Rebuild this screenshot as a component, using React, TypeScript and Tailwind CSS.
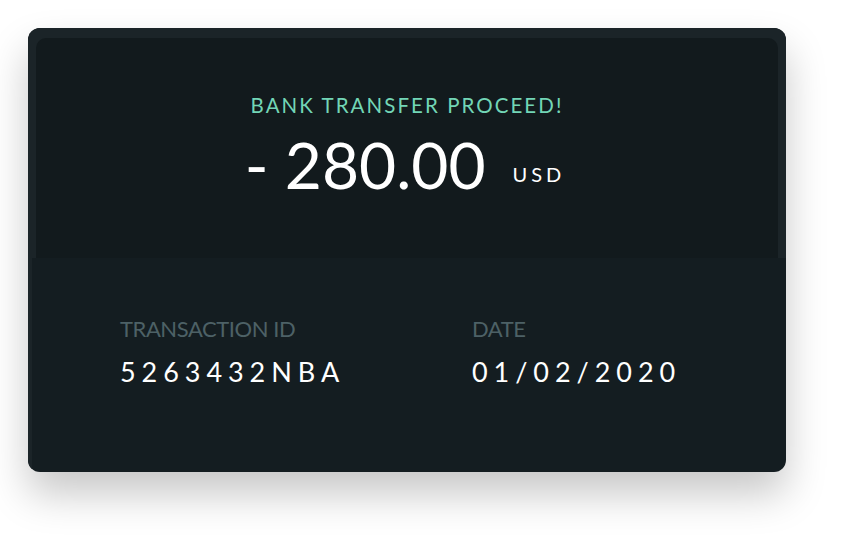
export default function App() {
  return (
    <div className="w-[850px] h-[536px] bg-white pt-[28px] pl-[28px]" style={{ fontFamily: 'Lato, "Open Sans", sans-serif' }}>
      <div className="w-[758px] h-[444px] rounded-[12px] bg-[#141d21] shadow-[0_22px_40px_rgba(0,0,0,0.22)] overflow-hidden flex flex-col">
        <div className="bg-[#1b2428] pt-[10px] px-[8px]">
          <div className="h-[220px] rounded-t-[10px] bg-[#121a1d] flex flex-col items-center pt-[57px]">
            <div className="text-[20.5px] leading-none text-[#72d6b6] tracking-[0.1em]">BANK TRANSFER PROCEED!</div>
            <div className="flex items-baseline mt-[17px] text-white ml-[-4px]">
              <span className="text-[64px] leading-none">- 280.00</span>
              <span className="relative top-[-7px] text-[20px] tracking-[0.2em] ml-[27px]">USD</span>
            </div>
          </div>
        </div>
        <div className="flex-1 border-l-4 border-[#1b2428] flex pl-[88px] pt-[60px]">
          <div className="w-[352px]">
            <div className="text-[22px] leading-none text-[#4d6166] tracking-[-0.02em]">TRANSACTION ID</div>
            <div className="text-[27px] leading-none text-white tracking-[0.22em] mt-[18px]">5263432NBA</div>
          </div>
          <div>
            <div className="text-[22px] leading-none text-[#4d6166] tracking-[-0.02em]">DATE</div>
            <div className="text-[27px] leading-none text-white tracking-[0.22em] mt-[18px]">01/02/2020</div>
          </div>
        </div>
      </div>
    </div>
  );
}
